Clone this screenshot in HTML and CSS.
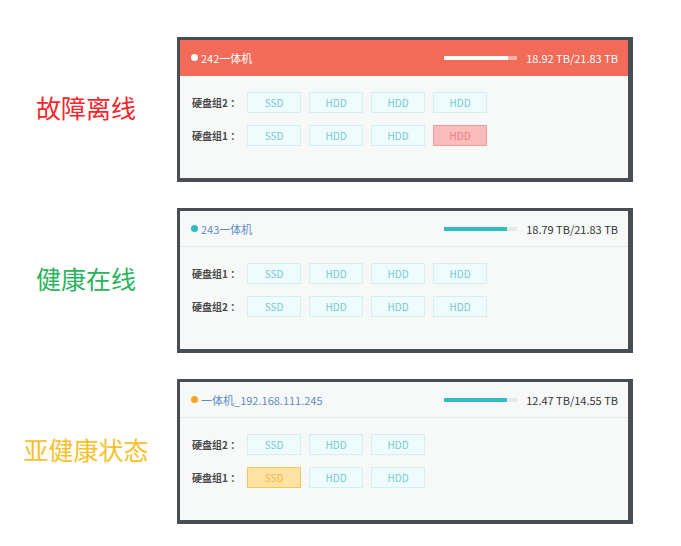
FILE: index.html
```html
<!DOCTYPE html>
<html lang="zh-CN">
<head>
    <meta charset="UTF-8">
    <meta name="viewport" content="width=device-width, initial-scale=1.0">
    <title>一体机状态</title>
    <link rel="stylesheet" href="styles.css">
</head>
<body>
    <div class="list">
        <div class="status-row">
            <div class="status-label fault">故障离线</div>
            <div class="host fault">
                <div class="host-head">
                    <span class="dot"></span>
                    <span class="host-name">242一体机</span>
                    <div class="usage">
                        <div class="bar"><div class="bar-fill" style="width: 87%;"></div></div>
                        <span class="usage-text">18.92 TB/21.83 TB</span>
                    </div>
                </div>
                <div class="host-body">
                    <div class="disk-row">
                        <span class="group-name">硬盘组2 ：</span>
                        <span class="disk">SSD</span>
                        <span class="disk">HDD</span>
                        <span class="disk">HDD</span>
                        <span class="disk">HDD</span>
                    </div>
                    <div class="disk-row">
                        <span class="group-name">硬盘组1 ：</span>
                        <span class="disk">SSD</span>
                        <span class="disk">HDD</span>
                        <span class="disk">HDD</span>
                        <span class="disk bad">HDD</span>
                    </div>
                </div>
            </div>
        </div>

        <div class="status-row">
            <div class="status-label ok">健康在线</div>
            <div class="host ok">
                <div class="host-head">
                    <span class="dot"></span>
                    <span class="host-name">243一体机</span>
                    <div class="usage">
                        <div class="bar"><div class="bar-fill" style="width: 86%;"></div></div>
                        <span class="usage-text">18.79 TB/21.83 TB</span>
                    </div>
                </div>
                <div class="host-body">
                    <div class="disk-row">
                        <span class="group-name">硬盘组1 ：</span>
                        <span class="disk">SSD</span>
                        <span class="disk">HDD</span>
                        <span class="disk">HDD</span>
                        <span class="disk">HDD</span>
                    </div>
                    <div class="disk-row">
                        <span class="group-name">硬盘组2 ：</span>
                        <span class="disk">SSD</span>
                        <span class="disk">HDD</span>
                        <span class="disk">HDD</span>
                        <span class="disk">HDD</span>
                    </div>
                </div>
            </div>
        </div>

        <div class="status-row">
            <div class="status-label warn">亚健康状态</div>
            <div class="host warn">
                <div class="host-head">
                    <span class="dot"></span>
                    <span class="host-name">一体机_192.168.111.245</span>
                    <div class="usage">
                        <div class="bar"><div class="bar-fill" style="width: 86%;"></div></div>
                        <span class="usage-text">12.47 TB/14.55 TB</span>
                    </div>
                </div>
                <div class="host-body">
                    <div class="disk-row">
                        <span class="group-name">硬盘组2 ：</span>
                        <span class="disk">SSD</span>
                        <span class="disk">HDD</span>
                        <span class="disk">HDD</span>
                    </div>
                    <div class="disk-row">
                        <span class="group-name">硬盘组1 ：</span>
                        <span class="disk weak">SSD</span>
                        <span class="disk">HDD</span>
                        <span class="disk">HDD</span>
                    </div>
                </div>
            </div>
        </div>
    </div>
</body>
</html>
```

FILE: styles.css
```css
body {
    margin: 0;
    background-color: #fff;
    font-family: "Noto Sans CJK SC", "Liberation Sans", sans-serif;
}
.list {
    padding-top: 37px;
    display: flex;
    flex-direction: column;
    gap: 26px;
}
.status-row {
    display: flex;
    align-items: center;
}
.status-label {
    width: 172px;
    margin-right: 5px;
    padding-bottom: 5px;
    text-align: center;
    font-size: 25px;
    line-height: 30px;
}
.status-label.fault {
    color: #f5262c;
}
.status-label.ok {
    color: #2bb35d;
}
.status-label.warn {
    color: #f8c12c;
}

/* 一体机卡片 */
.host {
    width: 456px;
    box-sizing: border-box;
    border-style: solid;
    border-color: #474e56;
    border-width: 3px 5px 4px 3px;
    background-color: #f7f9f9;
}
.host-head {
    height: 36px;
    box-sizing: border-box;
    display: flex;
    align-items: center;
    padding: 0 10px 0 11px;
    border-bottom: 1px solid #e5e9e9;
    font-size: 11px;
}
.dot {
    width: 7px;
    height: 7px;
    border-radius: 50%;
    margin-right: 3px;
}
.host-name {
    color: #5f8bc4;
}
.usage {
    margin-left: auto;
    display: flex;
    align-items: center;
}
.bar {
    width: 73px;
    height: 4px;
    background-color: #e4e8e8;
}
.bar-fill {
    height: 100%;
    background-color: #2fbec6;
}
.usage-text {
    margin-left: 9px;
    color: #333;
}

.host.fault .host-head {
    background-color: #f26a58;
    border-bottom-color: #f26a58;
}
.host.fault .dot {
    background-color: #fff;
}
.host.fault .host-name,
.host.fault .usage-text {
    color: #fff;
}
.host.fault .bar {
    background-color: #f8b0a6;
}
.host.fault .bar-fill {
    background-color: #fff;
}
.host.ok .dot {
    background-color: #2bbdc5;
}
.host.warn .dot {
    background-color: #f8a51c;
}

.host-body {
    padding: 16px 0 32px 12px;
    display: flex;
    flex-direction: column;
    gap: 12px;
}
.disk-row {
    display: flex;
    align-items: center;
    height: 21px;
}
.group-name {
    width: 55px;
    font-size: 10px;
    font-weight: bold;
    color: #4a4a4a;
    white-space: nowrap;
}
.disk {
    width: 54px;
    height: 21px;
    box-sizing: border-box;
    margin-right: 8px;
    border: 1px solid #d3eff0;
    background-color: #effcfd;
    color: #72c9cf;
    font-size: 10px;
    display: flex;
    align-items: center;
    justify-content: center;
}
.disk.bad {
    background-color: #fdbcbc;
    border-color: #f49c9c;
    color: #ef7b7b;
}
.disk.weak {
    background-color: #fde3a2;
    border-color: #f5c65e;
    color: #f3b64c;
}
```
